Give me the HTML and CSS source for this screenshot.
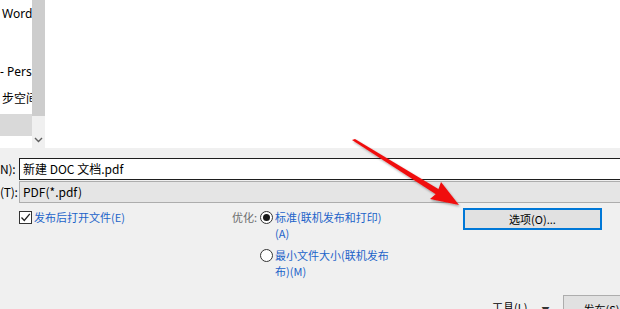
FILE: index.html
```html
<!DOCTYPE html>
<html lang="zh-CN">
<head>
<meta charset="utf-8">
<link rel="stylesheet" href="styles.css">
</head>
<body>
<div class="dialog">
  <div class="browser">
    <div class="nav">
      <div class="nav-item i1">Word</div>
      <div class="nav-item i2">- Personal</div>
      <div class="nav-item i3">步空间</div>
      <div class="nav-sel"></div>
    </div>
    <div class="scroll">
      <div class="thumb"></div>
      <div class="down">
        <svg width="9" height="6" viewBox="0 0 9 6"><path d="M1 1 L4.5 4.5 L8 1" fill="none" stroke="#606060" stroke-width="1.4"/></svg>
      </div>
    </div>
    <div class="files"></div>
  </div>

  <div class="lower">
    <div class="field-row">
      <span class="lbl">N):</span>
      <div class="input">新建 DOC 文档.pdf</div>
    </div>
    <div class="field-row">
      <span class="lbl">(T):</span>
      <div class="combo">PDF(*.pdf)</div>
    </div>

    <div class="opts">
      <div class="chk-col">
        <span class="chk">
          <svg width="11" height="11" viewBox="0 0 11 11"><path d="M1.5 5.5 L4.3 8.5 L9.8 1.8" fill="none" stroke="#222" stroke-width="1.3"/></svg>
        </span>
        <span class="blue">发布后打开文件(E)</span>
      </div>
      <div class="opt-col">
        <span class="gray">优化:</span>
        <div class="radios">
          <div class="radio-row">
            <span class="radio on"><span class="dot"></span></span>
            <span class="blue">标准(联机发布和打印)<br>(A)</span>
          </div>
          <div class="radio-row">
            <span class="radio"></span>
            <span class="blue">最小文件大小(联机发布<br>布)(M)</span>
          </div>
        </div>
      </div>
      <button class="btn focus">选项(O)...</button>
    </div>

    <div class="bottom">
      <span class="tools">工具(L)</span>
      <span class="caret">▼</span>
      <button class="btn publish">发布(S)</button>
    </div>
  </div>

  <svg class="arrow" width="620" height="309" viewBox="0 0 620 309">
    <defs>
      <filter id="sh" x="-10%" y="-10%" width="130%" height="130%">
        <feDropShadow dx="1" dy="1.5" stdDeviation="1" flood-color="#000" flood-opacity="0.35"/>
      </filter>
    </defs>
    <g filter="url(#sh)" fill="#f01010" stroke="none">
      <path d="M352 140 L355 139 L440 190 L437 195 Z"/>
      <path d="M459 205 L430 199 L437 193 L441 182 Z"/>
    </g>
  </svg>
</div>
</body>
</html>
```

FILE: styles.css
```css
* { box-sizing: border-box; }
html, body {
  margin: 0;
  padding: 0;
}
body {
  width: 620px;
  height: 309px;
  overflow: hidden;
  background: #f0f0f0;
  font-family: "Noto Sans CJK SC", "Noto Sans", sans-serif;
  font-size: 12px;
  color: #000;
}
.dialog {
  position: relative;
  width: 620px;
  height: 309px;
  overflow: hidden;
}
.browser {
  display: flex;
  height: 148px;
  background: #fff;
}
.nav {
  width: 32px;
  overflow: hidden;
  white-space: nowrap;
  display: flex;
  flex-direction: column;
}
.nav-item {
  height: 16px;
  line-height: 16px;
  padding-left: 2px;
  font-family: "Noto Sans", "Noto Sans CJK SC", sans-serif;
  font-size: 12px;
}
.nav-item.i1 { margin-top: 6px; }
.nav-item.i2 { margin-top: 42px; padding-left: 0; }
.nav-item.i3 { margin-top: 11px; }
.nav-sel {
  margin-top: 7px;
  height: 22px;
  background: #d9d9d9;
}
.scroll {
  width: 13px;
  background: #f0f0f0;
  display: flex;
  flex-direction: column;
}
.thumb {
  height: 116px;
  background: #cdcdcd;
}
.down {
  flex: 1;
  display: flex;
  align-items: flex-end;
  justify-content: center;
  padding-bottom: 5px;
}
.files {
  flex: 1;
  background: #fff;
}
.lower {
  padding-top: 10px;
  height: 161px;
}
.field-row {
  display: flex;
  align-items: center;
  height: 22px;
  margin-bottom: 1px;
}
.lbl {
  width: 19px;
  font-size: 12px;
  line-height: 16px;
  color: #000;
  letter-spacing: -0.3px;
}
.input {
  flex: 1;
  height: 22px;
  border: 1px solid #1e1e1e;
  border-right: none;
  background: #fff;
  padding-left: 3px;
  line-height: 19px;
}
.combo {
  flex: 1;
  height: 22px;
  border: 1px solid #adadad;
  border-right: none;
  background: #e5e5e5;
  padding-left: 3px;
  line-height: 19px;
}
.opts {
  display: flex;
  align-items: flex-start;
  margin-top: 5px;
  height: 86px;
  font-size: 11px;
}
.chk-col {
  display: flex;
  align-items: center;
  margin-left: 19px;
  width: 213px;
  height: 16px;
  margin-top: 1px;
  white-space: nowrap;
}
.chk {
  width: 13px;
  height: 13px;
  border: 1px solid #333;
  background: #fff;
  display: flex;
  align-items: center;
  justify-content: center;
  margin-right: 2px;
}
.blue {
  color: #1c63c9;
  line-height: 16px;
}
.gray {
  color: #6d6d6d;
  line-height: 16px;
  margin-top: 1px;
  white-space: nowrap;
}
.opt-col {
  display: flex;
  width: 231px;
  white-space: nowrap;
}
.radios {
  display: flex;
  flex-direction: column;
  gap: 5px;
  margin-left: 3px;
}
.radio-row {
  display: flex;
  align-items: flex-start;
}
.radio-row .blue { margin-top: 1px; }
.radio {
  width: 13px;
  height: 13px;
  border: 1px solid #333;
  border-radius: 50%;
  background: #fff;
  margin-top: 3px;
  margin-right: 2px;
  display: flex;
  align-items: center;
  justify-content: center;
  flex: none;
}
.dot {
  width: 7px;
  height: 7px;
  border-radius: 50%;
  background: #1a1a1a;
}
.btn {
  font-family: "Noto Sans CJK SC", "Noto Sans", sans-serif;
  font-size: 11px;
  color: #000;
  background: #e1e1e1;
  border: 1px solid #adadad;
  padding: 0;
  line-height: 16px;
  white-space: nowrap;
}
.btn.focus {
  width: 139px;
  height: 22px;
  border: 2px solid #0078d7;
  flex: none;
}
.bottom {
  display: flex;
  align-items: flex-start;
  margin-top: 1px;
  height: 30px;
  white-space: nowrap;
  font-size: 11px;
}
.tools {
  margin-left: 492px;
  margin-top: 4px;
  line-height: 16px;
}
.caret {
  font-size: 8px;
  margin-left: 14px;
  margin-top: 9px;
  color: #333;
}
.btn.publish {
  margin-left: 14px;
  width: 60px;
  height: 24px;
  text-align: left;
  padding-left: 19px;
  padding-top: 4px;
  flex: none;
}
.arrow {
  position: absolute;
  left: 0;
  top: 0;
  pointer-events: none;
}
```
